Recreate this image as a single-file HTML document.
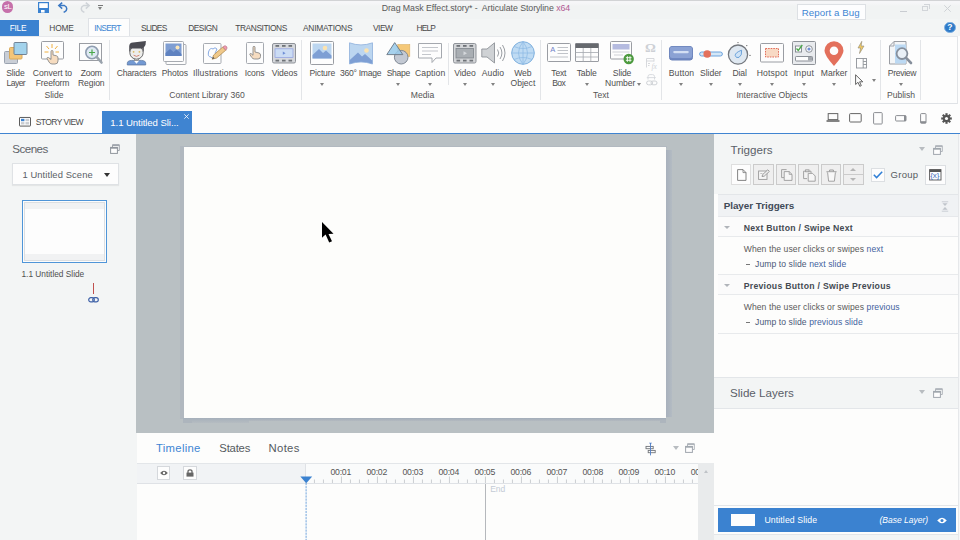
<!DOCTYPE html>
<html>
<head>
<meta charset="utf-8">
<title>Articulate Storyline</title>
<style>
*{box-sizing:border-box;margin:0;padding:0}
html,body{width:960px;height:540px;overflow:hidden;background:#fdfdfd;font-family:"Liberation Sans",sans-serif;color:#4a4a4a}
.a{position:absolute}
.t{position:absolute;white-space:nowrap;line-height:1}
#titlebar{left:0;top:0;width:960px;height:36px;background:linear-gradient(#f6f6f8 0,#f6f6f8 3px,#f1f3f3 6px,#f1f3f3 100%)}
#topline{left:0;top:0;width:960px;height:1px;background:#d2d3d5}
#ribbon{left:0;top:35.5px;width:958.3px;height:68px;background:#fdfdfd;border-top:1px solid #e6e8eb;border-bottom:1px solid #dfe2e6;border-right:1px solid #e3e5e8}
#tabrow{left:0;top:104px;width:960px;height:29px;background:#fdfdfd}
#blueline{left:0;top:133px;width:960px;height:2px;background:#3f84d1}
.menu{font-size:8.4px;top:23.7px;color:#484848;letter-spacing:-0.1px}
.rl{font-size:8.8px;color:#4f4f4f;text-align:center;transform:translateX(-50%);line-height:10px;letter-spacing:-0.1px}
.rl2{font-size:8.6px;color:#4f4f4f}
.gl{font-size:8.6px;color:#555;transform:translateX(-50%);top:90.5px}
.sep{width:1px;background:#e3e5e8}
.arr{width:0;height:0;border-left:2.5px solid transparent;border-right:2.5px solid transparent;border-top:3px solid #828282}
svg{position:absolute;overflow:visible}
</style>
</head>
<body>
<!-- TITLE BAR -->
<div class="a" id="titlebar"></div>
<div class="a" id="topline"></div>
<div class="a" style="left:0;top:18.5px;width:958.3px;height:17.5px;background:#f3f5f5"></div>
<div class="a" style="left:1.6px;top:1.4px;width:11.8px;height:11.8px;border-radius:50%;background:#c670aa"></div>
<div class="t" style="left:4.1px;top:2.6px;font-size:7.8px;color:#fff;letter-spacing:-0.5px">sL</div>
<!-- save -->
<svg style="left:38px;top:2px" width="11" height="11" viewBox="0 0 11 11"><rect x="0.6" y="0.6" width="9.8" height="9.8" fill="#fff" stroke="#3b82d0" stroke-width="1.2"/><rect x="0.6" y="6" width="9.8" height="4.4" fill="#3b82d0"/><rect x="3" y="8" width="3.6" height="2.6" fill="#fff"/></svg>
<!-- undo -->
<svg style="left:58px;top:2px" width="12" height="11" viewBox="0 0 12 11"><path d="M1 3.6 H6.5 A3.4 3.4 0 0 1 6.5 10 H5.6" fill="none" stroke="#3b78c4" stroke-width="1.5"/><path d="M4.2 0.6 L0.8 3.6 L4.2 6.6" fill="none" stroke="#3b78c4" stroke-width="1.5"/></svg>
<!-- redo -->
<svg style="left:78px;top:2px" width="12" height="11" viewBox="0 0 12 11"><path d="M11 3.6 H5.5 A3.4 3.4 0 0 0 5.5 10 H6.4" fill="none" stroke="#cfd3d8" stroke-width="1.5"/><path d="M7.8 0.6 L11.2 3.6 L7.8 6.6" fill="none" stroke="#cfd3d8" stroke-width="1.5"/></svg>
<!-- qat dropdown -->
<div class="a" style="left:97.5px;top:5px;width:5.5px;height:1px;background:#777"></div>
<div class="a arr" style="left:97.7px;top:7px"></div>

<div class="t" style="left:381.7px;top:3.7px;font-size:8.8px;color:#5a5a5a;letter-spacing:-0.07px">Drag Mask Effect.story* -&nbsp; Articulate Storyline <span style="color:#b15a94">x64</span></div>

<div class="a" style="left:796.5px;top:3.8px;width:69.5px;height:15.8px;background:#fdfdfe;border:1px solid #dde0e4"></div>
<div class="t" style="left:801.7px;top:7.6px;font-size:9.7px;color:#3d85d3;letter-spacing:0.08px">Report a Bug</div>
<!-- window controls -->
<div class="a" style="left:900px;top:10.5px;width:7px;height:1px;background:#c9ccd1"></div>
<div class="a" style="left:922px;top:5.5px;width:6px;height:5px;border:1px solid #d2d5d9"></div>
<div class="a" style="left:923.5px;top:4px;width:6px;height:5px;border:1px solid #d2d5d9;border-left:none;border-bottom:none"></div>
<svg style="left:944px;top:4.5px" width="7" height="7" viewBox="0 0 7 7"><path d="M0.3 0.3 L6.7 6.7 M6.7 0.3 L0.3 6.7" stroke="#cfd2d6" stroke-width="1"/></svg>
<!-- help -->
<div class="a" style="left:944px;top:21.5px;width:11.5px;height:11.5px;border-radius:50%;background:#2e7ac8;border:1px solid #7fb0e2"></div>
<div class="t" style="left:947.3px;top:23.2px;font-size:8.5px;font-weight:bold;color:#fff">?</div>

<!-- MENU -->
<div class="a" style="left:0;top:19.5px;width:39px;height:16.5px;background:#3b82d0"></div>
<div class="t menu" style="left:9.7px;letter-spacing:-0.28px;color:#fff">FILE</div>
<div class="t menu" style="left:49.3px;letter-spacing:-0.20px">HOME</div>
<div class="t menu" style="left:141px;letter-spacing:-0.69px">SLIDES</div>
<div class="t menu" style="left:188.3px;letter-spacing:-0.53px">DESIGN</div>
<div class="t menu" style="left:235.3px;letter-spacing:-0.43px">TRANSITIONS</div>
<div class="t menu" style="left:303px;letter-spacing:-0.22px">ANIMATIONS</div>
<div class="t menu" style="left:373px;letter-spacing:-0.49px">VIEW</div>
<div class="t menu" style="left:416.5px;letter-spacing:-0.81px">HELP</div>

<!-- RIBBON -->
<div class="a" id="ribbon"></div>
<div class="a" style="left:88px;top:18.3px;width:41.6px;height:18.2px;background:#fdfdfd;border:1px solid #dfe2e6;border-bottom:none"></div>
<div class="t menu" style="left:94.3px;letter-spacing:-0.71px;color:#3d85d3">INSERT</div>
<!-- Slide Layer -->
<svg style="left:4px;top:42px" width="24" height="23" viewBox="0 0 24 23">
<rect x="0.5" y="9.5" width="13" height="12" rx="1" fill="#c9ced6" stroke="#9aa3b0"/>
<rect x="5.5" y="5.5" width="12.5" height="11.5" rx="1" fill="#f3c578" stroke="#d9aa5c"/>
<rect x="10" y="0.5" width="13" height="12" rx="1" fill="#a3d3ec" stroke="#68788c" stroke-width="0.9"/>
</svg>
<div class="t rl2" style="left:6.30px;top:69px;letter-spacing:-0.18px">Slide</div><div class="t rl2" style="left:6.60px;top:79px;letter-spacing:-0.60px">Layer</div>
<!-- Convert to Freeform -->
<svg style="left:41px;top:41px" width="24" height="24" viewBox="0 0 24 24">
<rect x="0.5" y="0.5" width="22" height="17.5" rx="1" fill="#fdfdfd" stroke="#9a9da3"/>
<path d="M11 3 V7 M5.5 5 L8 8 M16.5 5 L14 8 M3.5 11 H7.5 M14.5 11 H18" stroke="#f0b040" stroke-width="1" fill="none"/>
<path d="M10 10.5 Q10 9.5 11 9.5 Q12 9.5 12 10.5 V14 L15.5 14.8 Q17 15.2 17 17 V20 Q17 23 14 23 H11 Q9 23 8 21 L6 17.5 Q6 16 7.5 16.5 L10 18.5 Z" fill="#f6dcc0" stroke="#8a8a8a" stroke-width="0.9"/>
</svg>
<div class="t rl2" style="left:32.80px;top:69px;letter-spacing:-0.05px">Convert to</div><div class="t rl2" style="left:35.80px;top:79px;letter-spacing:-0.18px">Freeform</div>
<!-- Zoom Region -->
<svg style="left:79px;top:43px" width="25" height="22" viewBox="0 0 25 22">
<rect x="0.5" y="0.5" width="22" height="17" fill="#fdfdfd" stroke="#9a9da3"/>
<circle cx="13" cy="9.5" r="6.2" fill="#dfe9f3" stroke="#8f9db0" stroke-width="1.6"/>
<path d="M10 9.5 H16 M13 6.5 V12.5" stroke="#4aa84a" stroke-width="1.2"/>
<path d="M17.8 14.2 L22.5 19.5" stroke="#9aa3ad" stroke-width="2.6" stroke-linecap="round"/>
</svg>
<div class="t rl2" style="left:80.80px;top:69px;letter-spacing:-0.27px">Zoom</div><div class="t rl2" style="left:78.00px;top:79px;letter-spacing:-0.12px">Region</div>
<div class="t gl" style="left:54px">Slide</div>
<div class="a sep" style="left:109px;top:40px;height:60px"></div>

<!-- Characters -->
<svg style="left:125px;top:41px" width="23" height="24" viewBox="0 0 23 24">
<path d="M2.3 24 V22.3 Q2.3 19.6 6.5 19.4 H16.5 Q20.7 19.6 20.7 22.3 V24 Z" fill="#7399d2" stroke="#56719c" stroke-width="0.7"/>
<path d="M8.8 19.4 L11.5 22.8 L14.2 19.4 Z" fill="#fdfdfd"/>
<rect x="9.6" y="17.2" width="3.8" height="2.4" fill="#ececea" stroke="#6a6a6a" stroke-width="0.6"/>
<ellipse cx="11.5" cy="11.6" rx="6.7" ry="6.6" fill="#ededeb" stroke="#5c5c5e" stroke-width="0.9"/>
<path d="M4.2 11.5 V5.2 Q4.3 1.6 8 1.4 L20.9 0.1 Q21.2 4.2 18.8 6.6 V11.5 L17.4 7.6 H5.8 Z" fill="#4b4b52"/>
<circle cx="8.6" cy="10.8" r="0.9" fill="#d9b860"/><circle cx="14.4" cy="10.8" r="0.9" fill="#d9b860"/>
<path d="M8.6 14.2 Q11.5 16.6 14.4 14.2" fill="none" stroke="#d07a6a" stroke-width="0.9"/>
</svg>
<div class="t rl2" style="left:116.70px;top:69px;letter-spacing:-0.24px">Characters</div>
<!-- Photos -->
<svg style="left:163px;top:41px" width="24" height="24" viewBox="0 0 24 24">
<rect x="3" y="3.5" width="20" height="20" rx="1" fill="#fdfdfd" stroke="#a7abb1"/>
<rect x="0.5" y="0.5" width="20" height="20" rx="1" fill="#fdfdfd" stroke="#a7abb1"/>
<rect x="2.5" y="2.5" width="16" height="12.5" fill="#7f9ed2"/>
<path d="M2.5 12 L7 8 L10.5 11 L13.5 8.5 L18.5 13 V15 H2.5 Z" fill="#5f82c0"/>
<circle cx="14.5" cy="6.5" r="2" fill="#fbe6b8"/>
</svg>
<div class="t rl2" style="left:161.70px;top:69px;letter-spacing:-0.08px">Photos</div>
<!-- Illustrations -->
<svg style="left:203px;top:43px" width="26" height="22" viewBox="0 0 26 22">
<rect x="0.5" y="0.5" width="17.5" height="20" rx="1" fill="#fdfdfd" stroke="#a7abb1"/>
<path d="M5.5 9 Q7 4 10 6 Q12 3.5 14 6 Q11 10 13 13 Q10 17 8 14 Q4.5 14 5.5 9 Z" fill="none" stroke="#7aa2e0" stroke-width="0.9"/>
<path d="M9.2 16.2 L10.6 12 L19.8 4 L22.8 7.2 L13.6 15 Z" fill="#f0c98a" stroke="#a8844a" stroke-width="0.7"/>
<path d="M19.8 4 L21 3 Q22.4 2.2 23.6 3.6 Q24.6 5 23.6 6.2 L22.8 7.2 Z" fill="#f09ab0" stroke="#b0707a" stroke-width="0.6"/>
<path d="M9.2 16.2 L10 13.8 L11.6 15.3 Z" fill="#555"/>
</svg>
<div class="t rl2" style="left:193.00px;top:69px;letter-spacing:0.12px">Illustrations</div>
<!-- Icons -->
<svg style="left:246px;top:42px" width="18" height="22" viewBox="0 0 18 22">
<rect x="0.5" y="0.5" width="17" height="21" rx="1" fill="#fdfdfd" stroke="#a7abb1"/>
<path d="M7 5.5 Q7 4.3 8 4.3 Q9 4.3 9 5.5 V10 L13 11 Q14.5 11.5 14.5 13 V14.5 Q14.5 17 12 17 H8.5 Q6.8 17 5.8 15.5 L3.8 12.5 Q3.8 11.2 5.2 11.7 L7 13.3 Z" fill="#f6dcc0" stroke="#8a8a8a" stroke-width="0.9"/>
</svg>
<div class="t rl2" style="left:244.70px;top:69px;letter-spacing:-0.15px">Icons</div>
<!-- Videos -->
<svg style="left:272px;top:43px" width="24" height="21" viewBox="0 0 24 21">
<rect x="0.5" y="0.5" width="23" height="19.5" rx="1.5" fill="#d6d8dc" stroke="#8f9399"/>
<rect x="3" y="5.8" width="18" height="8.8" fill="#cbdcf4" stroke="#8f9fe0" stroke-width="0.7"/>
<path d="M10.8 8.6 L13.6 10.2 L10.8 11.8 Z" fill="#6f8fd6"/>
<g fill="#6f7378"><rect x="3.5" y="2" width="3.6" height="1.8"/><rect x="10" y="2" width="3.6" height="1.8"/><rect x="16.5" y="2" width="3.6" height="1.8"/><rect x="3.5" y="16.7" width="3.6" height="1.8"/><rect x="10" y="16.7" width="3.6" height="1.8"/><rect x="16.5" y="16.7" width="3.6" height="1.8"/></g>
</svg>
<div class="t rl2" style="left:271.70px;top:69px;letter-spacing:-0.05px">Videos</div>
<div class="t gl" style="left:207px">Content Library 360</div>
<div class="a sep" style="left:301px;top:40px;height:60px"></div>
<!-- Picture -->
<svg style="left:310px;top:41px" width="24" height="24" viewBox="0 0 24 24">
<rect x="0.5" y="0.5" width="23" height="23" rx="1" fill="#fdfdfd" stroke="#9a9da3"/>
<rect x="2.5" y="2.5" width="19" height="15" fill="#bcd6f0"/>
<path d="M2.5 14 L9 8 L13 12 L16 9.5 L21.5 14.5 V17.5 H2.5 Z" fill="#7e9fd4"/>
<circle cx="15" cy="7" r="2.3" fill="#fbe3b0"/>
</svg>
<div class="t rl2" style="left:309.50px;top:69px;letter-spacing:-0.18px">Picture</div>
<div class="a arr" style="left:319.5px;top:83px"></div>
<!-- 360 Image -->
<svg style="left:349px;top:42px" width="24" height="23" viewBox="0 0 24 23">
<path d="M0.5 0.8 Q12 5 23.5 0.8 V22 Q12 18 0.5 22 Z" fill="#bcd6f0" stroke="#8fb0dc" stroke-width="0.8"/>
<path d="M0.8 18 L9 10.5 L13 14.5 L16 12 L23.2 18.5 V21.8 Q12 17.8 0.8 21.8 Z" fill="#7e9fd4"/>
<circle cx="17.5" cy="8.5" r="2.3" fill="#fbe3b0"/>
</svg>
<div class="t rl2" style="left:340.00px;top:69px;letter-spacing:-0.28px">360° Image</div>
<!-- Shape -->
<svg style="left:386px;top:42px" width="25" height="23" viewBox="0 0 25 23">
<rect x="11.8" y="2.6" width="12" height="11.8" fill="#f5c878" stroke="#d9ae62" stroke-width="0.6"/>
<circle cx="15.2" cy="15.2" r="6.8" fill="#c3c9d3" stroke="#7f8894" stroke-width="1"/>
<path d="M0.8 12.6 L8.7 0.6 L16.8 12.6 Z" fill="#96c9ea" fill-opacity="0.85" stroke="#6a7684" stroke-width="0.9"/>
</svg>
<div class="t rl2" style="left:386.70px;top:69px;letter-spacing:-0.31px">Shape</div>
<div class="a arr" style="left:396px;top:83px"></div>
<!-- Caption -->
<svg style="left:418px;top:43px" width="24" height="21" viewBox="0 0 24 21">
<path d="M0.5 0.5 H23.5 V15 H18 L14 19.5 V15 H0.5 Z" fill="#fdfdfd" stroke="#a4a8ae"/>
<path d="M4 4.5 H20 M4 8 H20 M4 11.5 H13" stroke="#c3c6cb" stroke-width="1.1"/>
</svg>
<div class="t rl2" style="left:415.00px;top:69px;letter-spacing:0.10px">Caption</div>
<div class="a arr" style="left:427.5px;top:83px"></div>
<div class="a sep" style="left:448px;top:43px;height:42px"></div>
<!-- Video -->
<svg style="left:453px;top:43px" width="24" height="21" viewBox="0 0 24 21">
<rect x="0.5" y="0.5" width="22.5" height="19.5" rx="1.5" fill="#d3d5d8" stroke="#8f9399"/>
<rect x="3" y="5.5" width="17.5" height="9.5" fill="#a9aeb3" stroke="#7f858c" stroke-width="0.8"/>
<path d="M10.5 8.3 L14 10.3 L10.5 12.3 Z" fill="#d5d8dc"/>
<g fill="#6f7378"><rect x="3.5" y="2" width="3.6" height="1.8"/><rect x="10" y="2" width="3.6" height="1.8"/><rect x="16.5" y="2" width="3.6" height="1.8"/><rect x="3.5" y="16.7" width="3.6" height="1.8"/><rect x="10" y="16.7" width="3.6" height="1.8"/><rect x="16.5" y="16.7" width="3.6" height="1.8"/></g>
</svg>
<div class="t rl2" style="left:454.20px;top:69px;letter-spacing:-0.05px">Video</div>
<div class="a arr" style="left:462.5px;top:83px"></div>
<!-- Audio -->
<svg style="left:481px;top:42px" width="26" height="23" viewBox="0 0 26 23">
<path d="M0.8 7 H6 L13.5 0.8 V21 L6 15 H0.8 Z" fill="#cfd2d5" stroke="#8f9399" stroke-width="0.9"/>
<path d="M16.5 7.5 Q19 11 16.5 14.5 M19 5 Q22.8 11 19 17 M21.5 3 Q26.5 11 21.5 19" fill="none" stroke="#8f9399" stroke-width="0.9"/>
</svg>
<div class="t rl2" style="left:481.70px;top:69px;letter-spacing:0.10px">Audio</div>
<div class="a arr" style="left:491px;top:83px"></div>
<!-- Web Object -->
<svg style="left:511px;top:41px" width="24" height="24" viewBox="0 0 24 24">
<circle cx="12" cy="12" r="11.3" fill="#bfdbf3" stroke="#7fb0de" stroke-width="1"/>
<path d="M12 0.7 V23.3 M0.7 12 H23.3 M12 0.7 Q3 12 12 23.3 M12 0.7 Q21 12 12 23.3 M3 5.5 Q12 9.5 21 5.5 M3 18.5 Q12 14.5 21 18.5" fill="none" stroke="#8fbbe4" stroke-width="0.8"/>
</svg>
<div class="t rl2" style="left:514.20px;top:69px;letter-spacing:-0.14px">Web</div><div class="t rl2" style="left:510.50px;top:79px;letter-spacing:-0.01px">Object</div>
<div class="t gl" style="left:422.5px">Media</div>
<div class="a sep" style="left:540px;top:40px;height:60px"></div>

<!-- Text Box -->
<svg style="left:547px;top:43px" width="24" height="20" viewBox="0 0 24 20">
<rect x="0.5" y="0.5" width="23" height="18" rx="1" fill="#fdfdfd" stroke="#9a9da3"/>
<path d="M10.5 4.5 H21 M10.5 7.5 H21 M10.5 10.5 H21 M3 14 H21" stroke="#b9bcc2" stroke-width="0.9"/>
</svg>
<div class="t" style="left:550.3px;top:46px;font-size:7.5px;color:#6f82c8">A</div>
<div class="t rl2" style="left:551.30px;top:69px;letter-spacing:-0.19px">Text</div><div class="t rl2" style="left:552.24px;top:79px;letter-spacing:-0.60px">Box</div>
<!-- Table -->
<svg style="left:575px;top:43px" width="24" height="20" viewBox="0 0 24 20">
<rect x="0.5" y="0.5" width="23" height="18" rx="0.5" fill="#fdfdfd" stroke="#9a9da3"/>
<rect x="0.5" y="0.5" width="23" height="4.5" fill="#66696e"/>
<path d="M0.5 9.5 H23.5 M0.5 14 H23.5 M8.2 5 V18.5 M15.8 5 V18.5" stroke="#a4a8ae" stroke-width="0.8"/>
</svg>
<div class="t rl2" style="left:576.70px;top:69px;letter-spacing:-0.11px">Table</div>
<div class="a arr" style="left:584.5px;top:83px"></div>
<!-- Slide Number -->
<svg style="left:610px;top:41px" width="25" height="24" viewBox="0 0 25 24">
<rect x="0.5" y="0.5" width="21" height="17.5" rx="1" fill="#fdfdfd" stroke="#9a9da3"/>
<rect x="2.5" y="3" width="17" height="5.5" fill="#b5bbe0"/>
<path d="M2.5 11 H19.5 M4 14 H13" stroke="#c9ccd1" stroke-width="0.9"/>
<circle cx="18.7" cy="18" r="5.2" fill="#4c9a3e"/>
<path d="M17.4 15.2 V20.8 M20 15.2 V20.8 M15.9 16.7 H21.5 M15.9 19.3 H21.5" stroke="#fff" stroke-width="0.9" fill="none"/>
</svg>
<div class="t rl2" style="left:612.80px;top:69px;letter-spacing:-0.14px">Slide</div><div class="t rl2" style="left:605.00px;top:79px;letter-spacing:-0.05px">Number</div>
<div class="a arr" style="left:636.5px;top:83px"></div>
<!-- small icons -->
<div class="t" style="left:645px;top:40.5px;font-size:13.5px;color:#cdd0d5;font-weight:bold;font-family:'Liberation Serif',serif">Ω</div>
<svg style="left:646px;top:58px" width="11" height="11" viewBox="0 0 11 11"><path d="M0.5 9.5 V0.5 H8 V3.5 M0.5 3 H8 M2 5.5 H4 M2 7.5 H3.5" fill="none" stroke="#d2d5d9" stroke-width="0.9"/></svg>
<div class="t" style="left:651.5px;top:62.5px;font-size:7.5px;font-style:italic;color:#cfd2d6;font-family:'Liberation Serif',serif">fx</div>
<svg style="left:645.5px;top:74px" width="12" height="12" viewBox="0 0 12 12"><path d="M2 5.5 V2.5 Q2 0.6 4 0.6 H6.5 Q8.5 0.6 8.5 2.5 V5.5 M0.8 3.6 H9.8" fill="none" stroke="#d5d8dc" stroke-width="0.9"/><rect x="0.6" y="7" width="6" height="3.8" rx="1.9" fill="none" stroke="#cfd2d6" stroke-width="1"/><rect x="5" y="7" width="6" height="3.8" rx="1.9" fill="none" stroke="#cfd2d6" stroke-width="1"/></svg>
<div class="t gl" style="left:601px">Text</div>
<div class="a sep" style="left:661px;top:40px;height:60px"></div>
<!-- Button -->
<svg style="left:669px;top:46px" width="24" height="15" viewBox="0 0 24 15">
<rect x="0.5" y="0.5" width="23" height="13.5" rx="2.5" fill="#6f88c2" stroke="#6a82ba"/>
<rect x="0.8" y="0.8" width="22.4" height="11.2" rx="2.3" fill="#8ba2d4"/>
<rect x="4.2" y="5" width="15.6" height="2.2" rx="1.1" fill="#d3dff3"/>
</svg>
<div class="t rl2" style="left:668.70px;top:69px;letter-spacing:0.11px">Button</div>
<div class="a arr" style="left:678.5px;top:83px"></div>
<!-- Slider -->
<svg style="left:699px;top:49px" width="24" height="10" viewBox="0 0 24 10">
<rect x="0.6" y="3" width="22.8" height="4" rx="2" fill="#d3e7f8" stroke="#5f98d8" stroke-width="0.9"/>
<circle cx="8.2" cy="5" r="3.8" fill="#e3705c"/>
</svg>
<div class="t rl2" style="left:700.00px;top:69px;letter-spacing:-0.05px">Slider</div>
<div class="a arr" style="left:708.5px;top:83px"></div>
<!-- Dial -->
<svg style="left:727px;top:41px" width="24" height="24" viewBox="0 0 24 24">
<circle cx="11" cy="13.6" r="9.6" fill="#dfe8f1" stroke="#73777d" stroke-width="1.3"/>
<path d="M14.6 9.2 Q15.2 14.6 12 16.4 Q8.9 17.4 8.2 14.6 Q8 11.6 14.6 9.2 Z" fill="#cfe3f6" stroke="#5f9ad6" stroke-width="0.9"/>
<circle cx="11" cy="1.6" r="0.6" fill="#555"/><circle cx="19.8" cy="4.6" r="0.6" fill="#555"/><circle cx="23" cy="14.4" r="0.6" fill="#555"/>
</svg>
<div class="t rl2" style="left:732.50px;top:69px;letter-spacing:-0.15px">Dial</div>
<div class="a arr" style="left:737.5px;top:83px"></div>
<!-- Hotspot -->
<svg style="left:760px;top:43px" width="24" height="20" viewBox="0 0 24 20">
<rect x="0.5" y="0.5" width="23" height="18.5" rx="1" fill="#fdfdfd" stroke="#9a9da3"/>
<rect x="5.5" y="5.5" width="13" height="8.5" fill="#f8d9c4" stroke="#e0604c" stroke-width="0.9" stroke-dasharray="1.6 1"/>
</svg>
<div class="t rl2" style="left:756.70px;top:69px;letter-spacing:0.17px">Hotspot</div>
<div class="a arr" style="left:769.5px;top:83px"></div>
<!-- Input -->
<svg style="left:792px;top:41px" width="24" height="24" viewBox="0 0 24 24">
<rect x="0.5" y="0.5" width="23" height="23" rx="1" fill="#e9ebee" stroke="#8f9399"/>
<rect x="3.5" y="5" width="6" height="6" fill="#fdfdfd" stroke="#7f858c" stroke-width="0.9"/>
<path d="M4.5 7.5 L6.3 9.5 L10.3 4" fill="none" stroke="#4aa84a" stroke-width="1.3"/>
<circle cx="17" cy="8" r="3.3" fill="#fdfdfd" stroke="#7f858c" stroke-width="0.9"/><circle cx="17" cy="8" r="1.6" fill="#6f8fd6"/>
<rect x="3.5" y="15.5" width="17" height="4.5" rx="0.8" fill="#fdfdfd" stroke="#7f858c" stroke-width="0.9"/>
<rect x="16" y="16" width="4" height="3.5" fill="#a4a8ae"/>
</svg>
<div class="t rl2" style="left:793.70px;top:69px;letter-spacing:0.28px">Input</div>
<div class="a arr" style="left:801.5px;top:83px"></div>
<!-- Marker -->
<svg style="left:824px;top:41px" width="20" height="26" viewBox="0 0 20 26">
<path d="M10 25 Q0.5 14.5 0.5 9.8 A9.5 9.5 0 0 1 19.5 9.800000000000001 Q19.5 14.5 10 25 Z" fill="#e3705c"/>
<circle cx="10" cy="9.8" r="4.3" fill="#fdfdfd"/>
</svg>
<div class="t rl2" style="left:820.80px;top:69px;letter-spacing:-0.01px">Marker</div>
<div class="a arr" style="left:831.5px;top:83px"></div>
<div class="a sep" style="left:850px;top:43px;height:42px"></div>
<!-- small: lightning, panel, cursor -->
<svg style="left:857px;top:41px" width="8" height="13" viewBox="0 0 8 13"><path d="M4.8 0.3 L1 7 H3.6 L2.5 12.5 L7 5 H4.2 Z" fill="#efc866" stroke="#8f8a78" stroke-width="0.6"/></svg>
<svg style="left:855.5px;top:58px" width="11" height="11" viewBox="0 0 11 11"><rect x="0.5" y="0.5" width="10" height="9.5" fill="#fdfdfd" stroke="#8f9399" stroke-width="0.9"/><path d="M7.2 0.5 V10 M7.2 3.5 H10.5 M7.2 6.5 H10.5" stroke="#8f9399" stroke-width="0.9"/></svg>
<svg style="left:855px;top:74px" width="9" height="13" viewBox="0 0 9 13"><path d="M0.6 0.8 V10.5 L3 8.3 L4.8 12.3 L6.3 11.6 L4.6 7.8 H7.8 Z" fill="#fdfdfd" stroke="#555" stroke-width="0.9" stroke-linejoin="round"/></svg>
<div class="a arr" style="left:871.5px;top:79px"></div>
<div class="t gl" style="left:772px">Interactive Objects</div>
<div class="a sep" style="left:880px;top:40px;height:60px"></div>
<!-- Preview -->
<svg style="left:889px;top:41px" width="25" height="25" viewBox="0 0 25 25">
<path d="M0.5 5 L5 0.5 H17 V23 H0.5 Z" fill="#f3f5f7" stroke="#9a9da3"/>
<path d="M0.5 5 H5 V0.5" fill="none" stroke="#9a9da3" stroke-width="0.9"/>
<rect x="6" y="3.5" width="11" height="19" fill="#bcd9f3"/>
<circle cx="13" cy="12.6" r="5.4" fill="#e9f0f7" stroke="#868f9c" stroke-width="1.8"/>
<path d="M17.4 17.2 L22 22" stroke="#868f9c" stroke-width="2.6" stroke-linecap="round"/>
</svg>
<div class="t rl2" style="left:887.80px;top:69px;letter-spacing:-0.31px">Preview</div>
<div class="a arr" style="left:899px;top:83px"></div>
<div class="t gl" style="left:901px">Publish</div>
<div class="a sep" style="left:919.8px;top:40px;height:60px"></div>


<!-- TAB ROW -->
<div class="a" id="tabrow"></div>
<div class="a" id="blueline"></div>
<!-- story view icon -->
<svg style="left:19px;top:117px" width="12" height="10" viewBox="0 0 12 11" preserveAspectRatio="none"><rect x="0.5" y="0.5" width="11" height="9.5" rx="0.5" fill="#fdfdfd" stroke="#555" stroke-width="1"/><rect x="2" y="2" width="3.4" height="2.6" fill="#3b82d0"/><rect x="6.5" y="2" width="3.6" height="2.6" fill="#c9ccd1"/><rect x="2" y="5.6" width="3.4" height="2.6" fill="#c9ccd1"/><rect x="6.5" y="5.6" width="3.6" height="2.6" fill="#c9ccd1"/></svg>
<div class="t" style="left:35.7px;top:118.2px;font-size:8.5px;color:#4a4a4a;letter-spacing:-0.55px">STORY VIEW</div>
<div class="a" style="left:102px;top:111px;width:90px;height:23px;background:#3f84d1"></div>
<div class="t" style="left:110.3px;top:117.5px;font-size:9.6px;color:#fff;letter-spacing:-0.08px">1.1 Untitled Sli...</div>
<svg style="left:183.5px;top:113.5px" width="5" height="5" viewBox="0 0 5 5"><path d="M0.3 0.3 L4.7 4.7 M4.7 0.3 L0.3 4.7" stroke="#fff" stroke-width="0.8"/></svg>
<!-- device icons -->
<svg style="left:826px;top:113px" width="14" height="10" viewBox="0 0 14 10"><rect x="2.2" y="0.6" width="9.6" height="6" fill="none" stroke="#666" stroke-width="1"/><rect x="0.5" y="7.2" width="13" height="1.6" fill="#666"/></svg>
<svg style="left:849px;top:113px" width="13" height="10" viewBox="0 0 13 10"><rect x="0.6" y="0.6" width="11.6" height="8.4" rx="0.8" fill="none" stroke="#666" stroke-width="1"/></svg>
<svg style="left:873px;top:112px" width="10" height="13" viewBox="0 0 10 13"><rect x="0.6" y="0.6" width="8.6" height="11.4" rx="0.8" fill="none" stroke="#8a8d92" stroke-width="1"/></svg>
<svg style="left:895px;top:115px" width="12" height="7" viewBox="0 0 12 7"><rect x="0.6" y="0.6" width="10.4" height="5.4" rx="0.8" fill="#fdfdfd" stroke="#8a8d92" stroke-width="1"/><rect x="9" y="0.6" width="2" height="5.4" fill="#8a8d92"/></svg>
<svg style="left:920px;top:113px" width="7" height="11" viewBox="0 0 7 11"><rect x="0.6" y="0.6" width="5.4" height="9.6" rx="0.8" fill="#fdfdfd" stroke="#8a8d92" stroke-width="1"/><rect x="0.6" y="8.2" width="5.4" height="2" fill="#8a8d92"/></svg>
<!-- gear -->
<svg style="left:941px;top:113px" width="11" height="11" viewBox="-5.5 -5.5 11 11"><g fill="#555"><circle r="3.6"/><rect x="-1.1" y="-5.3" width="2.2" height="10.6"/><rect x="-1.1" y="-5.3" width="2.2" height="10.6" transform="rotate(45)"/><rect x="-1.1" y="-5.3" width="2.2" height="10.6" transform="rotate(90)"/><rect x="-1.1" y="-5.3" width="2.2" height="10.6" transform="rotate(135)"/></g><circle r="1.6" fill="#fdfdfd"/></svg>


<div class="a" style="left:0;top:134px;width:136.7px;height:406px;background:#f3f5f5"></div>
<div class="t" style="left:12.2px;top:142.7px;font-size:11.6px;color:#5f646a;letter-spacing:-0.5px">Scenes</div>
<svg style="left:109.5px;top:144px" width="10" height="10" viewBox="0 0 10 10"><path d="M2.5 3 V0.8 H9.3 V6.5 H7.5" fill="none" stroke="#a0a6ad" stroke-width="1"/><path d="M2.5 1.2 H9.3" stroke="#a0a6ad" stroke-width="1.6"/><rect x="0.6" y="3.4" width="6.8" height="6" fill="#fdfdfd" stroke="#8f959c" stroke-width="1"/><path d="M0.6 3.9 H7.4" stroke="#8f959c" stroke-width="1.6"/></svg>
<div class="a" style="left:12.3px;top:163.3px;width:106.5px;height:22px;background:#fdfdfd;border:1px solid #dfe2e5;box-shadow:0 1px 1px rgba(0,0,0,0.06)"></div>
<div class="t" style="left:22.4px;top:170.2px;font-size:9.4px;color:#5a5f66;letter-spacing:0.1px">1 Untitled Scene</div>
<div class="a arr" style="left:103.8px;top:173px;border-left-width:3.2px;border-right-width:3.2px;border-top:4px solid #333"></div>
<div class="a" style="left:22px;top:200px;width:85px;height:63px;background:#fdfdfd;border:1px solid #4f95d8"></div>
<div class="a" style="left:24px;top:202px;width:81px;height:59px;background:#fdfdfd;border:1px solid #dcdfe2"></div>
<div class="a" style="left:25px;top:203px;width:79px;height:5.5px;background:#f1f2f3"></div>
<div class="a" style="left:25px;top:253.5px;width:79px;height:6.5px;background:#f1f2f3"></div>
<div class="t" style="left:21.5px;top:269.5px;font-size:8.3px;color:#4f4f4f">1.1 Untitled Slide</div>
<div class="a" style="left:93px;top:283px;width:1px;height:11px;background:#c0504d"></div>
<svg style="left:88px;top:297px" width="11" height="6" viewBox="0 0 11 6"><rect x="0.7" y="0.7" width="5.6" height="4.2" rx="2.1" fill="none" stroke="#3f62a8" stroke-width="1.2"/><rect x="4.7" y="0.7" width="5.6" height="4.2" rx="2.1" fill="none" stroke="#3f62a8" stroke-width="1.2"/></svg>

<div class="a" style="left:136.2px;top:134px;width:578px;height:298.5px;background:#b9c0c3"></div>
<div class="a" style="left:180.3px;top:146.3px;width:4px;height:272.7px;background:#b1b8bf"></div><div class="a" style="left:666px;top:149.8px;width:5.8px;height:267.2px;background:linear-gradient(90deg,#a8b1bc,#b3bbc3)"></div><div class="a" style="left:184px;top:418px;width:482px;height:2.6px;background:linear-gradient(#a3adb9,#b3bac0)"></div><div class="a" style="left:183px;top:418px;width:66px;height:4.6px;background:linear-gradient(#a6b0bb,#b5bcc1)"></div><div class="a" style="left:183px;top:419.5px;width:9px;height:3.5px;background:#adb5bd"></div><div class="a" style="left:660px;top:419.5px;width:6px;height:3.5px;background:#adb5bd"></div><div class="a" style="left:183px;top:145.7px;width:484px;height:2px;background:#b2b9c0"></div><div class="a" style="left:184px;top:146.8px;width:482.3px;height:271.5px;background:#fdfdfb"></div>
<svg style="left:0;top:0" width="960" height="540" viewBox="0 0 960 540"><path d="M322 222 L322 237.8 L325.6 234.6 L329.2 242.6 L332 241.3 L328.5 233.9 L333.5 233.8 Z" fill="#000"/></svg>

<div class="a" style="left:136.5px;top:432.5px;width:577.5px;height:107.5px;background:#fdfdfc"></div>
<div class="t" style="left:156px;top:442.5px;font-size:11.3px;color:#3d85d3;letter-spacing:0.3px">Timeline</div>
<div class="t" style="left:219.3px;top:442.5px;font-size:11.3px;color:#555a60;letter-spacing:-0.2px">States</div>
<div class="t" style="left:268.6px;top:442.5px;font-size:11.3px;color:#555a60;letter-spacing:0.3px">Notes</div>
<svg style="left:644.8px;top:441.5px" width="11" height="14" viewBox="0 0 11 14"><rect x="1" y="4.4" width="7.2" height="2.3" fill="#fdfdfd" stroke="#707479" stroke-width="0.9"/><rect x="3.2" y="8.4" width="7" height="2.3" fill="#fdfdfd" stroke="#707479" stroke-width="0.9"/><path d="M5.5 1.4 V13.4" stroke="#4f7fc8" stroke-width="0.9"/><path d="M4 0.7 H7 L5.5 2.6 Z" fill="#4f7fc8"/></svg>
<div class="a arr" style="left:672.6px;top:446px;border-left-width:3.3px;border-right-width:3.3px;border-top:4px solid #b8bcc0"></div>
<svg style="left:685px;top:443px" width="10" height="10" viewBox="0 0 10 10"><path d="M2.5 3 V0.8 H9.3 V6.5 H7.5" fill="none" stroke="#b0b5bb" stroke-width="1"/><path d="M2.5 1.2 H9.3" stroke="#b0b5bb" stroke-width="1.6"/><rect x="0.6" y="3.4" width="6.8" height="6" fill="#fdfdfd" stroke="#a0a6ad" stroke-width="1"/><path d="M0.6 3.9 H7.4" stroke="#a0a6ad" stroke-width="1.6"/></svg>
<div class="a" style="left:136.5px;top:463px;width:561.5px;height:20.5px;background:#f1f3f5;border-top:1px solid #e3e6e9;border-bottom:1px solid #dfe2e6"></div>
<div class="a" style="left:305px;top:464px;width:393px;height:18.5px;background:#fafbfb;border-left:1px solid #dfe2e6"></div>
<div class="a" style="left:698px;top:463px;width:16px;height:77px;background:#e9ebec"></div>
<div class="a" style="left:703.6px;top:469.6px;width:0;height:0;border-left:2.3px solid transparent;border-right:2.3px solid transparent;border-bottom:3.8px solid #bfc3c7"></div>
<div class="a" style="left:157px;top:466px;width:13px;height:13.5px;background:#fdfdfd;border:1px solid #d5d8dc"></div>
<svg style="left:159.5px;top:470px" width="8" height="6" viewBox="0 0 8 6"><path d="M0.2 3 Q4 -1.6 7.8 3 Q4 7.6 0.2 3 Z" fill="#666"/><circle cx="4" cy="3" r="1.2" fill="#fdfdfd"/></svg>
<div class="a" style="left:183px;top:466px;width:13.5px;height:13.5px;background:#fdfdfd;border:1px solid #d5d8dc"></div>
<svg style="left:186px;top:468.5px" width="8" height="8" viewBox="0 0 8 8"><path d="M2 4 V2.4 Q2 0.8 4 0.8 Q6 0.8 6 2.4 V4" fill="none" stroke="#666" stroke-width="1.3"/><rect x="0.5" y="3.6" width="7" height="4" fill="#666"/></svg>
<svg style="left:0;top:0" width="960" height="540" viewBox="0 0 960 540"><path d="M314.45 479.5 V483 M323.45 479.5 V483 M332.45 479.5 V483 M341.45 476.5 V483 M350.45 479.5 V483 M359.45 479.5 V483 M368.45 479.5 V483 M377.45 476.5 V483 M386.45 479.5 V483 M395.45 479.5 V483 M404.45 479.5 V483 M413.45 476.5 V483 M422.45 479.5 V483 M431.45 479.5 V483 M440.45 479.5 V483 M449.45 476.5 V483 M458.45 479.5 V483 M467.45 479.5 V483 M476.45 479.5 V483 M485.45 476.5 V483 M494.45 479.5 V483 M503.45 479.5 V483 M512.45 479.5 V483 M521.45 476.5 V483 M530.45 479.5 V483 M539.45 479.5 V483 M548.45 479.5 V483 M557.45 476.5 V483 M566.45 479.5 V483 M575.45 479.5 V483 M584.45 479.5 V483 M593.45 476.5 V483 M602.45 479.5 V483 M611.45 479.5 V483 M620.45 479.5 V483 M629.45 476.5 V483 M638.45 479.5 V483 M647.45 479.5 V483 M656.45 479.5 V483 M665.45 476.5 V483 M674.45 479.5 V483 M683.45 479.5 V483 M692.45 479.5 V483" stroke="#c5c8cc" stroke-width="0.9" fill="none"/></svg>
<div class="t" style="left:340.75px;top:467.5px;font-size:8.7px;color:#555;letter-spacing:-0.27px;transform:translateX(-50%)">00:01</div>
<div class="t" style="left:376.75px;top:467.5px;font-size:8.7px;color:#555;letter-spacing:-0.27px;transform:translateX(-50%)">00:02</div>
<div class="t" style="left:412.75px;top:467.5px;font-size:8.7px;color:#555;letter-spacing:-0.27px;transform:translateX(-50%)">00:03</div>
<div class="t" style="left:448.75px;top:467.5px;font-size:8.7px;color:#555;letter-spacing:-0.27px;transform:translateX(-50%)">00:04</div>
<div class="t" style="left:484.75px;top:467.5px;font-size:8.7px;color:#555;letter-spacing:-0.27px;transform:translateX(-50%)">00:05</div>
<div class="t" style="left:520.75px;top:467.5px;font-size:8.7px;color:#555;letter-spacing:-0.27px;transform:translateX(-50%)">00:06</div>
<div class="t" style="left:556.75px;top:467.5px;font-size:8.7px;color:#555;letter-spacing:-0.27px;transform:translateX(-50%)">00:07</div>
<div class="t" style="left:592.75px;top:467.5px;font-size:8.7px;color:#555;letter-spacing:-0.27px;transform:translateX(-50%)">00:08</div>
<div class="t" style="left:628.75px;top:467.5px;font-size:8.7px;color:#555;letter-spacing:-0.27px;transform:translateX(-50%)">00:09</div>
<div class="t" style="left:664.75px;top:467.5px;font-size:8.7px;color:#555;letter-spacing:-0.27px;transform:translateX(-50%)">00:10</div>
<div class="a" style="left:690px;top:467.5px;width:8px;height:10px;overflow:hidden"><div class="t" style="left:0.8px;top:0;font-size:8.7px;color:#555;letter-spacing:-0.27px">00:11</div></div>
<div class="a" style="left:484.5px;top:483.5px;width:1px;height:57px;background:#b5b8bc"></div>
<div class="t" style="left:490.2px;top:485.3px;font-size:8.5px;color:#c3cbd5">End</div>
<svg style="left:299.5px;top:475.5px" width="13" height="65" viewBox="0 0 13 65"><path d="M0.3 0.5 H12.2 L6.25 7.2 Z" fill="#3b82d0"/><path d="M6.1 7 V65" stroke="#4f8fd6" stroke-width="0.8" stroke-dasharray="2.2 0.9"/></svg>

<div class="a" style="left:714px;top:134px;width:246px;height:406px;background:#f3f5f5"></div>
<div class="a" style="left:958px;top:134px;width:2px;height:406px;background:#f6f7f8;border-left:1px solid #e6e8ea"></div>
<div class="a" style="left:714.3px;top:194px;width:243.7px;height:346px;background:#fdfdfc"></div>
<div class="t" style="left:730.5px;top:144px;font-size:11.6px;color:#5a6068">Triggers</div>
<div class="a arr" style="left:919.4px;top:147.3px;border-left-width:3.3px;border-right-width:3.3px;border-top:4px solid #b8bcc0"></div>
<svg style="left:933px;top:144.5px" width="10" height="10" viewBox="0 0 10 10"><path d="M2.5 3 V0.8 H9.3 V6.5 H7.5" fill="none" stroke="#b0b5bb" stroke-width="1"/><path d="M2.5 1.2 H9.3" stroke="#b0b5bb" stroke-width="1.6"/><rect x="0.6" y="3.4" width="6.8" height="6" fill="#fdfdfd" stroke="#a0a6ad" stroke-width="1"/><path d="M0.6 3.9 H7.4" stroke="#a0a6ad" stroke-width="1.6"/></svg>
<div class="a" style="left:730.5px;top:164.2px;width:20.8px;height:20.4px;background:#fdfdfd;border:1px solid #dedede"></div>
<div class="a" style="left:753.2px;top:164.2px;width:20.8px;height:20.4px;background:#efefef;border:1px solid #cbcbcb"></div>
<div class="a" style="left:775.6px;top:164.2px;width:20.8px;height:20.4px;background:#efefef;border:1px solid #cbcbcb"></div>
<div class="a" style="left:798.1px;top:164.2px;width:20.8px;height:20.4px;background:#efefef;border:1px solid #cbcbcb"></div>
<div class="a" style="left:820.5px;top:164.2px;width:20.8px;height:20.4px;background:#efefef;border:1px solid #cbcbcb"></div>
<div class="a" style="left:843.3px;top:164.2px;width:20.8px;height:20.4px;background:#efefef;border:1px solid #cbcbcb"></div>
<svg style="left:736.5px;top:169px" width="10" height="12" viewBox="0 0 10 12"><path d="M0.6 0.6 H6 L9 3.6 V11.4 H0.6 Z" fill="#fdfdfd" stroke="#777" stroke-width="0.9"/><path d="M6 0.6 V3.6 H9" fill="none" stroke="#777" stroke-width="0.8"/></svg>
<svg style="left:757.5px;top:168.5px" width="13" height="12" viewBox="0 0 13 12"><rect x="0.6" y="2" width="8.4" height="8.4" fill="#f6f6f6" stroke="#9a9a9a" stroke-width="0.9"/><path d="M4 7.5 L4.6 5.6 L9.8 0.8 L11.4 2.4 L6.2 7.2 Z" fill="#eee" stroke="#8a8a8a" stroke-width="0.8"/><path d="M2.3 4.5 H4.5" stroke="#aaa" stroke-width="0.7"/></svg>
<svg style="left:780.5px;top:169px" width="12" height="12" viewBox="0 0 12 12"><path d="M3 8.6 H0.6 V0.6 H5.6" fill="none" stroke="#9a9a9a" stroke-width="0.9"/><path d="M3.2 2.6 H8.2 L11 5.4 V11.4 H3.2 Z" fill="#f6f6f6" stroke="#9a9a9a" stroke-width="0.9"/><path d="M8.2 2.6 V5.4 H11" fill="none" stroke="#9a9a9a" stroke-width="0.8"/></svg>
<svg style="left:802.5px;top:168.5px" width="13" height="13" viewBox="0 0 13 13"><path d="M4 9.6 H0.6 V2.2 H8 V4" fill="#f2f2f2" stroke="#9a9a9a" stroke-width="0.9"/><rect x="2.6" y="0.8" width="3.4" height="2" fill="#ddd" stroke="#9a9a9a" stroke-width="0.8"/><path d="M5.2 4.4 H9.6 L12.2 7 V12.2 H5.2 Z" fill="#f6f6f6" stroke="#9a9a9a" stroke-width="0.9"/></svg>
<svg style="left:825.5px;top:168.5px" width="11" height="13" viewBox="0 0 11 13"><path d="M0.4 2.8 H10.6 M3.6 2.6 V1 H7.4 V2.6" fill="none" stroke="#9a9a9a" stroke-width="1"/><path d="M1.6 3.4 L2.6 12.2 H8.4 L9.4 3.4" fill="#f8f8f8" stroke="#9a9a9a" stroke-width="0.9"/></svg>
<div class="a" style="left:844.3px;top:174.2px;width:18.8px;height:1px;background:#cbcbcb"></div>
<div class="a" style="left:850.4px;top:168px;width:0;height:0;border-left:3px solid transparent;border-right:3px solid transparent;border-bottom:3.4px solid #b5b5b5"></div>
<div class="a" style="left:850.4px;top:178px;width:0;height:0;border-left:3px solid transparent;border-right:3px solid transparent;border-top:3.4px solid #b5b5b5"></div>
<div class="a" style="left:871px;top:168px;width:13.5px;height:13.5px;background:#fdfdfd;border:1px solid #dcdfe2"></div>
<svg style="left:873px;top:171px" width="10" height="8" viewBox="0 0 10 8"><path d="M0.8 3.8 L3.6 6.6 L9.2 0.8" fill="none" stroke="#2f7fd6" stroke-width="1.5"/></svg>
<div class="t" style="left:890.6px;top:170.2px;font-size:9.5px;color:#555a60;letter-spacing:0.28px">Group</div>
<div class="a" style="left:925px;top:164.5px;width:21px;height:20.5px;background:#fdfdfd;border:1px solid #dcdfe2"></div>
<svg style="left:929px;top:169px" width="13" height="12" viewBox="0 0 13 12"><rect x="0.6" y="0.6" width="11.4" height="10.4" fill="#fdfdfd" stroke="#555" stroke-width="0.9"/><rect x="0.6" y="0.6" width="11.4" height="2.4" fill="#555"/></svg>
<div class="t" style="left:930.3px;top:172px;font-size:8px;color:#3f6fc0;letter-spacing:-0.1px">{x}</div>
<div class="a" style="left:718px;top:193.7px;width:240px;height:23px;background:#f0f2f4;border-top:1px solid #e3e6e9;border-bottom:1px solid #e6e8eb"></div>
<div class="t" style="left:723.7px;top:201.3px;font-size:9.9px;font-weight:bold;color:#3f4a57;letter-spacing:-0.05px">Player Triggers</div>
<svg style="left:941px;top:200.5px" width="8" height="11" viewBox="0 0 8 11"><path d="M0.8 0.8 H7.2 M0.8 10.2 H7.2" stroke="#c5cad0" stroke-width="0.9"/><path d="M1.4 2.2 H6.6 L4 5 Z M1.4 8.8 H6.6 L4 6 Z" fill="#c0c5cb"/></svg>
<div class="a" style="left:718px;top:216.5px;width:240px;height:20.5px;background:#fbfbfb;border-bottom:1px solid #e8eaec"></div>
<div class="a arr" style="left:723.8px;top:225.8px;border-left-width:3.3px;border-right-width:3.3px;border-top:3.9px solid #b0b4b9"></div>
<div class="t" style="left:743.7px;top:223.5px;font-size:8.7px;font-weight:bold;color:#444a52;letter-spacing:0.27px">Next Button / Swipe Next</div>
<div class="t" style="left:743.7px;top:244.8px;font-size:8.6px;color:#5a5a5a;letter-spacing:0.08px">When the user clicks or swipes <span style="color:#3f62a0">next</span></div>
<div class="a" style="left:745.5px;top:263.5px;width:4.5px;height:1px;background:#777"></div>
<div class="t" style="left:755px;top:259.8px;font-size:8.6px;color:#4a5878;letter-spacing:0.08px">Jump to slide <span style="color:#3f62a0">next slide</span></div>
<div class="a" style="left:718px;top:274px;width:240px;height:1px;background:#e8eaec"></div>
<div class="a" style="left:718px;top:274.5px;width:240px;height:20.5px;background:#fbfbfb;border-bottom:1px solid #e8eaec"></div>
<div class="a arr" style="left:723.8px;top:283.8px;border-left-width:3.3px;border-right-width:3.3px;border-top:3.9px solid #b0b4b9"></div>
<div class="t" style="left:743.7px;top:281.5px;font-size:8.7px;font-weight:bold;color:#444a52;letter-spacing:0.27px">Previous Button / Swipe Previous</div>
<div class="t" style="left:743.7px;top:303.3px;font-size:8.6px;color:#5a5a5a;letter-spacing:0.08px">When the user clicks or swipes <span style="color:#3f62a0">previous</span></div>
<div class="a" style="left:745.5px;top:322px;width:4.5px;height:1px;background:#777"></div>
<div class="t" style="left:755px;top:318.3px;font-size:8.6px;color:#4a5878;letter-spacing:0.08px">Jump to slide <span style="color:#3f62a0">previous slide</span></div>
<div class="a" style="left:718px;top:332.5px;width:240px;height:1px;background:#e8eaec"></div>
<div class="a" style="left:714.3px;top:377px;width:243.7px;height:31.8px;background:#f3f5f5;border-top:1px solid #e3e6e9;border-bottom:1px solid #e3e6e9"></div>
<div class="t" style="left:730px;top:386.5px;font-size:11.6px;color:#5a6068">Slide Layers</div>
<div class="a arr" style="left:919.4px;top:390.3px;border-left-width:3.3px;border-right-width:3.3px;border-top:4px solid #b8bcc0"></div>
<svg style="left:933px;top:387.5px" width="10" height="10" viewBox="0 0 10 10"><path d="M2.5 3 V0.8 H9.3 V6.5 H7.5" fill="none" stroke="#b0b5bb" stroke-width="1"/><path d="M2.5 1.2 H9.3" stroke="#b0b5bb" stroke-width="1.6"/><rect x="0.6" y="3.4" width="6.8" height="6" fill="#fdfdfd" stroke="#a0a6ad" stroke-width="1"/><path d="M0.6 3.9 H7.4" stroke="#a0a6ad" stroke-width="1.6"/></svg>

<div class="a" style="left:714.3px;top:505px;width:243.7px;height:1px;background:#e3e6e9"></div>
<div class="a" style="left:717.5px;top:508px;width:238.7px;height:24px;background:#3b82d0"></div>
<div class="a" style="left:731px;top:514px;width:23.5px;height:11.5px;background:#fdfdfd"></div>
<div class="t" style="left:764.5px;top:515.7px;font-size:8.7px;color:#fff;letter-spacing:0.1px">Untitled Slide</div>
<div class="t" style="left:879.5px;top:515.5px;font-size:8.5px;color:#fff;font-style:italic">(Base Layer)</div>
<svg style="left:936.5px;top:517px" width="10" height="7" viewBox="0 0 10 7"><path d="M0.2 3.5 Q5 -2 9.8 3.5 Q5 9 0.2 3.5 Z" fill="#fff"/><circle cx="5" cy="3.5" r="1.5" fill="#3b82d0"/></svg>
<div class="a" style="left:714.3px;top:534px;width:243.7px;height:6px;background:#f3f5f5;border-top:1px solid #e3e6e9"></div>

</body>
</html>
